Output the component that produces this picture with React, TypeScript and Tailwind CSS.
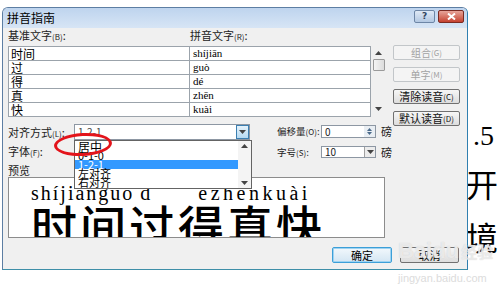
import React from "react";

const cjk = "font-['Noto_Sans_CJK_SC','Microsoft_YaHei',sans-serif]";

const rows = [
  { base: "时间", py: "shíjiān" },
  { base: "过", py: "guò" },
  { base: "得", py: "dé" },
  { base: "真", py: "zhēn" },
  { base: "快", py: "kuài" },
];

function Key({ k }: { k: string }) {
  return <span className="text-[8px]">({k})</span>;
}

function SideButton({ label, k, disabled }: { label: string; k: string; disabled?: boolean }) {
  return (
    <div
      className={
        disabled
          ? "flex h-[15px] items-center justify-center rounded-[2px] border border-[#c2c6c9] bg-[#f4f4f4] text-[10px] text-[#a3a3a3]"
          : "flex h-[15px] items-center justify-center rounded-[2px] border border-[#707070] bg-gradient-to-b from-[#f6f6f6] to-[#dddddd] text-[11px] text-[#111]"
      }
    >
      {label}
      <Key k={k} />
    </div>
  );
}

function Arrow({ up }: { up?: boolean }) {
  return (
    <svg width="7" height="4" viewBox="0 0 7 4">
      <path d={up ? "M0 4 L3.5 0 L7 4 Z" : "M0 0 L3.5 4 L7 0 Z"} fill="#444" />
    </svg>
  );
}

export default function App() {
  return (
    <div className={`relative h-[294px] w-[500px] overflow-hidden bg-white ${cjk}`}>
      {/* document text behind the dialog */}
      <div className="absolute left-[473px] top-[122px] font-['Liberation_Serif',serif] text-[28px] leading-none text-black">
        .5
      </div>
      <div className="absolute left-[466px] top-[167px] text-[32px] leading-none text-black">开</div>
      <div className="absolute left-[466px] top-[220px] text-[32px] leading-none text-black">境</div>

      {/* dialog */}
      <div className="absolute left-[2px] top-[7px] flex h-[263px] w-[466px] flex-col overflow-visible rounded-t-[6px] border border-[#5d7ea3] border-b-[#3e8fa8] border-r-[#2f7fb0] bg-[#f0f0f0]">
        {/* title bar */}
        <div className="flex h-[20px] items-start justify-between rounded-t-[5px] bg-gradient-to-b from-[#bed4ee] to-[#d7e5f5] pl-[4px] pr-[3px] pt-[2px]">
          <span className="pt-[1px] text-[12px] leading-[14px] text-black">拼音指南</span>
          <div className="flex gap-[3px]">
            <div className="flex h-[13px] w-[21px] items-center justify-center rounded-[2px] border border-[#6d86a6] bg-gradient-to-b from-[#dfe9f5] to-[#b3c8e2] font-['DejaVu_Sans',sans-serif] text-[9px] font-bold leading-none text-[#33475f]">
              ?
            </div>
            <div className="flex h-[13px] w-[26px] items-center justify-center rounded-[2px] border border-[#7a2b23] bg-gradient-to-b from-[#e6a49a] to-[#c4402f]">
              <svg width="9" height="7" viewBox="0 0 9 7">
                <path d="M1 0.5 L8 6.5 M8 0.5 L1 6.5" stroke="white" strokeWidth="2" />
              </svg>
            </div>
          </div>
        </div>

        {/* body */}
        <div className="relative flex-1 pl-[5px] pr-[7px]">
          <div className="flex h-[14px] whitespace-nowrap text-[11px] leading-[14px] text-[#222]">
            <span className="w-[182px]">
              基准文字<Key k="B" />:
            </span>
            <span>
              拼音文字<Key k="R" />:
            </span>
          </div>

          <div className="mt-[4px] flex h-[71px] items-start">
            <div className="w-[363px] border-t border-[#9ba3ab]">
              {rows.map((r) => (
                <div key={r.base} className="flex h-[14px] border-b border-[#9ba3ab]">
                  <div className="w-[182px] border-l border-r border-[#9ba3ab] bg-white pl-[2px] text-[12px] leading-[13px] text-black">
                    {r.base}
                  </div>
                  <div className="flex-1 border-r border-[#9ba3ab] bg-white pl-[3px] font-['Liberation_Serif',serif] text-[11px] leading-[13px] text-black">
                    {r.py}
                  </div>
                </div>
              ))}
            </div>
            <div className="flex h-[71px] w-[15px] flex-col items-center bg-[#f0f0f0] pb-[6px] pt-[5px]">
              <Arrow up />
              <div className="mt-[4px] h-[12px] w-[12px] rounded-[1px] border border-[#9a9a9a] bg-gradient-to-r from-[#f4f4f4] to-[#dcdcdc]" />
              <div className="mt-auto">
                <Arrow />
              </div>
            </div>
            <div className="ml-[7px] mt-[-1px] flex w-[67px] flex-col gap-[7px]">
              <SideButton label="组合" k="G" disabled />
              <SideButton label="单字" k="M" disabled />
              <SideButton label="清除读音" k="C" />
              <SideButton label="默认读音" k="D" />
            </div>
          </div>

          {/* alignment / offset / font / size */}
          <div className="mt-[7px] flex whitespace-nowrap text-[11px] text-[#222]">
            <div className="w-[247px]">
              <div className="flex h-[16px] items-center">
                <span className="w-[66px]">
                  对齐方式<Key k="L" />:
                </span>
                <div className="relative flex h-[16px] w-[176px] border border-[#8d97a3] bg-white">
                  <span className="flex-1 pl-[3px] text-[10px] leading-[14px] text-[#444]">1-2-1</span>
                  <div className="flex w-[13px] items-center justify-center border border-[#3c7fb1] bg-gradient-to-b from-[#e4f2fb] to-[#b6daf2]">
                    <Arrow />
                  </div>
                  {/* dropdown list */}
                  <div className="absolute left-[-1px] top-[15px] z-10 flex h-[49px] w-[178px] border border-[#646464] bg-white">
                    <div className="flex-1 pt-[1px] text-[11px] text-black">
                      <div className="h-[9px] pl-[3px] text-[12px] leading-[9px]">居中</div>
                      <div className="h-[9px] pl-[3px] leading-[9px]">0-1-0</div>
                      <div className="h-[9px] bg-[#3399ff] pl-[3px] leading-[9px] text-white">1-2-1</div>
                      <div className="h-[9px] pl-[3px] leading-[9px]">左对齐</div>
                      <div className="h-[9px] pl-[3px] leading-[9px]">右对齐</div>
                    </div>
                    <div className="flex w-[13px] flex-col items-center justify-between bg-[#f4f4f4] py-[3px]">
                      <Arrow up />
                      <Arrow />
                    </div>
                  </div>
                </div>
              </div>
              <div className="mt-[3px] flex h-[16px] items-center">
                <span className="w-[66px]">
                  字体<Key k="F" />:
                </span>
              </div>
            </div>

            <div className="ml-[22px] flex flex-col text-[9.5px]">
              <div className="flex h-[15px] items-center">
                <span className="w-[44px]">
                  偏移量<Key k="O" />:
                </span>
                <div className="flex h-[13px] w-[55px] border border-[#8d97a3] bg-white">
                  <span className="flex-1 pl-[3px] text-[10px] leading-[11px]">0</span>
                  <div className="flex w-[11px] flex-col items-center justify-center gap-[1px] bg-[#e9eef3]">
                    <svg width="5" height="3" viewBox="0 0 5 3"><path d="M0 3 L2.5 0 L5 3Z" fill="#4a6a8a" /></svg>
                    <svg width="5" height="3" viewBox="0 0 5 3"><path d="M0 0 L2.5 3 L5 0Z" fill="#4a6a8a" /></svg>
                  </div>
                </div>
                <span className="ml-[5px] text-[11px]">磅</span>
              </div>
              <div className="mt-[6px] flex h-[14px] items-center">
                <span className="w-[44px]">
                  字号<Key k="S" />:
                </span>
                <div className="flex h-[12px] w-[55px] border border-[#8d97a3] bg-white">
                  <span className="flex-1 pl-[3px] text-[10px] leading-[10px]">10</span>
                  <div className="flex w-[11px] items-center justify-center border-l border-[#a0a0a0] bg-[#ececec]">
                    <Arrow />
                  </div>
                </div>
                <span className="ml-[5px] text-[11px]">磅</span>
              </div>
            </div>
          </div>

          <div className="mt-[4px] h-[14px] text-[11px] leading-[14px] text-[#222]">预览</div>

          {/* preview */}
          <div className="h-[61px] w-[377px] overflow-hidden border border-[#8c8c8c] bg-white">
            <div className="ml-[22px] mt-[3px] flex h-[22px] items-end font-['Liberation_Serif',serif] text-[20px] leading-none text-black">
              <span className="tracking-[2px]">shíjiānguò</span>
              <span className="ml-[6px]">d</span>
              <span className="ml-[48px] tracking-[3.5px]">ézhēnkuài</span>
            </div>
            <div className="ml-[22px] mt-[-2px] text-[46px] font-medium leading-none tracking-[3px] text-black">
              时间过得真快
            </div>
          </div>

          {/* OK / Cancel */}
          <div className="mt-[9px] flex justify-end gap-[8px] pr-[1px]">
            <div className="flex h-[16px] w-[60px] items-center justify-center rounded-[2px] border border-[#3c9fd8] bg-gradient-to-b from-[#f2f8fc] to-[#d4e6f3] text-[11px] text-black shadow-[inset_0_0_0_1px_#9ed3f2]">
              确定
            </div>
            <div className="flex h-[16px] w-[59px] items-center justify-center rounded-[2px] border border-[#707070] bg-gradient-to-b from-[#f6f6f6] to-[#dddddd] text-[11px] text-black">
              取消
            </div>
          </div>

          {/* red annotation ellipse */}
          <div className="absolute left-[51px] top-[105px] z-20 h-[23px] w-[58px] -rotate-3 rounded-[50%] border-[3px] border-[#e3141b]" />
        </div>
      </div>

      {/* watermark */}
      <div className="absolute left-[398px] top-[240px] flex items-center gap-[2px] text-[22px] font-bold leading-none text-white/60 [text-shadow:0_0_1px_#c8c8c8]">
        <span className="font-['Liberation_Sans',sans-serif]">Baidu</span>
        <span className="text-[16px]">经验</span>
      </div>
      <div className="absolute left-[398px] top-[273px] font-['Liberation_Sans',sans-serif] text-[11px] leading-none text-[#dcdcdc]">
        jingyan.baidu.com
      </div>
    </div>
  );
}
